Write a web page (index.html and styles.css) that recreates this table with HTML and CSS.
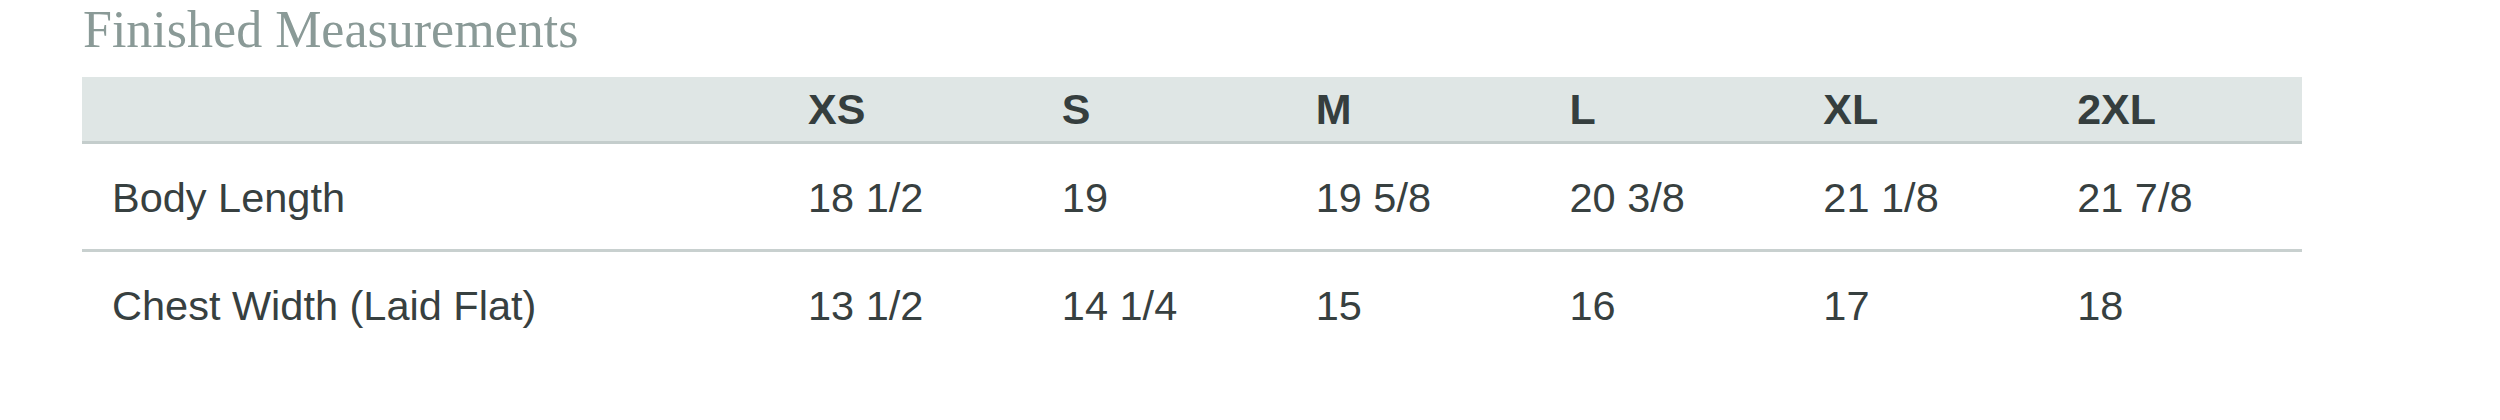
FILE: index.html
```html
<!DOCTYPE html>
<html lang="en">
<head>
<meta charset="utf-8">
<title>Finished Measurements</title>
<link rel="stylesheet" href="styles.css">
</head>
<body>
<section class="measure">
  <h2 class="title">Finished Measurements</h2>
  <div class="table">
    <div class="row head">
      <div class="cell label"></div>
      <div class="cell">XS</div>
      <div class="cell">S</div>
      <div class="cell">M</div>
      <div class="cell">L</div>
      <div class="cell">XL</div>
      <div class="cell">2XL</div>
    </div>
    <div class="row body divided">
      <div class="cell label">Body Length</div>
      <div class="cell">18 1/2</div>
      <div class="cell">19</div>
      <div class="cell">19 5/8</div>
      <div class="cell">20 3/8</div>
      <div class="cell">21 1/8</div>
      <div class="cell">21 7/8</div>
    </div>
    <div class="row body">
      <div class="cell label">Chest Width (Laid Flat)</div>
      <div class="cell">13 1/2</div>
      <div class="cell">14 1/4</div>
      <div class="cell">15</div>
      <div class="cell">16</div>
      <div class="cell">17</div>
      <div class="cell">18</div>
    </div>
  </div>
</section>
</body>
</html>
```
FILE: styles.css
```css
html, body {
  margin: 0;
  padding: 0;
  background: #ffffff;
}

.measure {
  margin-left: 82px;
  width: 2220px;
}

.title {
  margin: 0 0 21px 1px;
  padding-top: 4px;
  font-family: "Liberation Serif", "Times New Roman", serif;
  font-weight: normal;
  font-size: 52px;
  line-height: 52px;
  color: #8a9a97;
}

.table {
  display: flex;
  flex-direction: column;
}

.row {
  display: grid;
  grid-template-columns: 697px repeat(6, 1fr);
  align-items: center;
}

.cell {
  padding-left: 29px;
  white-space: nowrap;
}

.head {
  height: 64px;
  background: #dfe6e5;
  border-bottom: 3px solid #c4cdcc;
  font-family: "Liberation Sans", Arial, sans-serif;
  font-weight: bold;
  font-size: 43px;
  color: #353e3e;
}

.body {
  height: 105px;
  padding-top: 2px;
  box-sizing: border-box;
  font-family: "Liberation Sans", Arial, sans-serif;
  font-size: 41.5px;
  color: #374040;
}

.body.divided {
  height: 108px;
  border-bottom: 3px solid #c8d0cf;
}

.body .label {
  padding-left: 30px;
}
```
